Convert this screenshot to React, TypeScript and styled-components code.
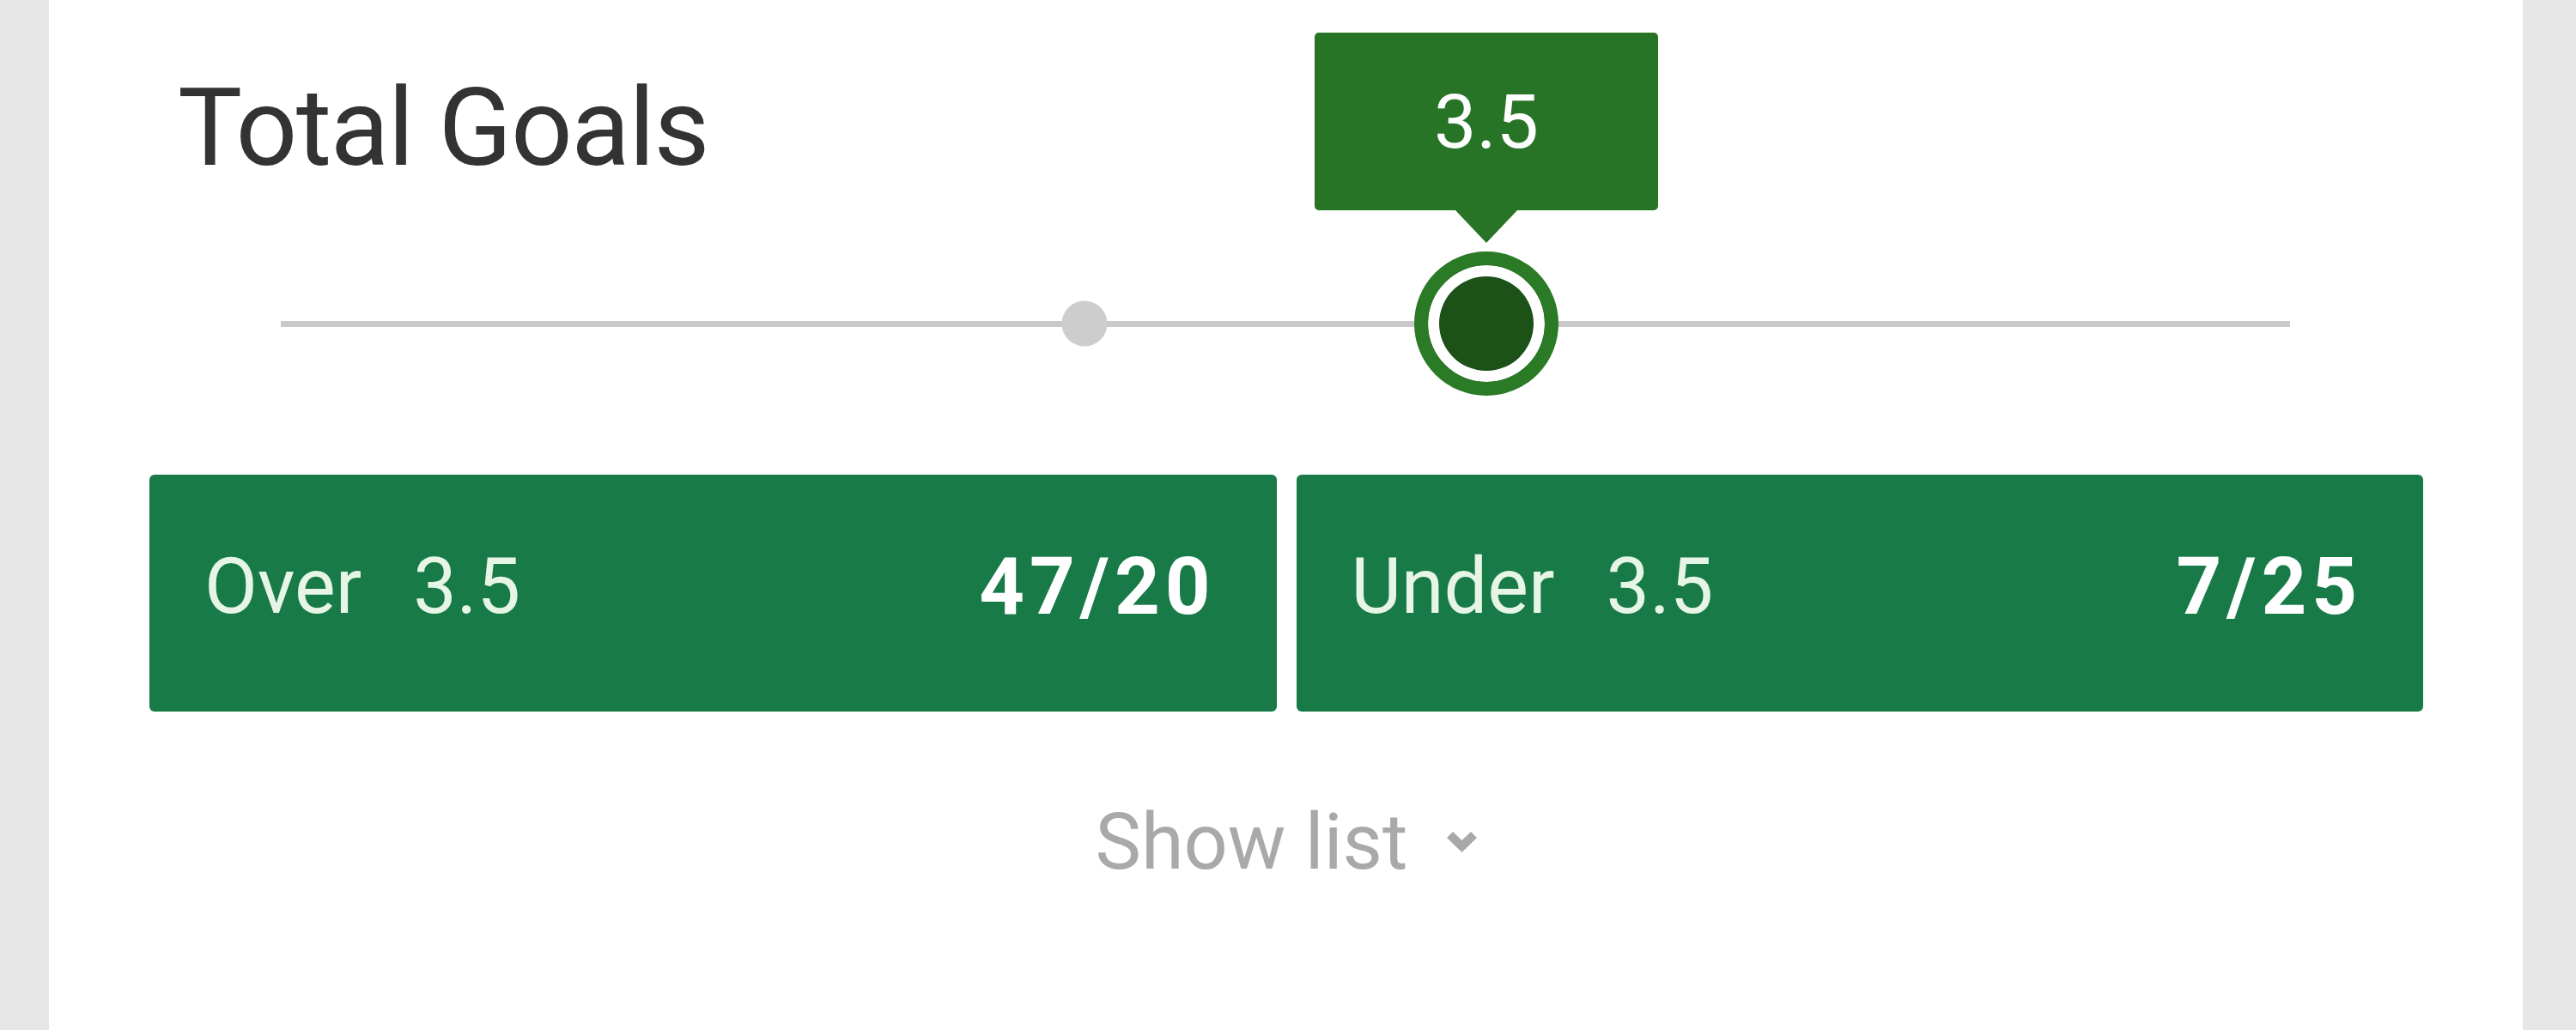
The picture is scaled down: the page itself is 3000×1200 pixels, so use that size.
import styled, { createGlobalStyle } from "styled-components";

const GlobalStyle = createGlobalStyle`
  html, body {
    margin: 0;
    padding: 0;
    background: #e7e7e7;
    font-family: Roboto, "Noto Sans", "Liberation Sans", sans-serif;
  }
`;

const marks = [40];
const value = { label: "3.5", pct: 60 };

const bets = [
  { side: "Over", line: "3.5", odds: "47/20" },
  { side: "Under", line: "3.5", odds: "7/25" },
];

const App: React.FC = () => {
  return (
    <>
      <GlobalStyle />
      <Page>
        <Card>
          <Title>Total Goals</Title>
          <Slider>
            <Track />
            {marks.map((m) => (
              <Mark key={m} style={{ left: `${m}%` }} />
            ))}
            <Handle style={{ left: `${value.pct}%` }}>
              <Tip>{value.label}</Tip>
              <Knob />
            </Handle>
          </Slider>
          <Buttons>
            {bets.map((b) => (
              <Bet key={b.side}>
                <Side>{b.side}</Side>
                <Line>{b.line}</Line>
                <Odds>{b.odds}</Odds>
              </Bet>
            ))}
          </Buttons>
          <ShowList>
            Show list
            <svg width="35" height="24" viewBox="0 0 35 24">
              <path d="M0 7 L7 0 L17.5 10 L28 0 L35 7 L17.5 24 Z" fill="#a9a9a9" />
            </svg>
          </ShowList>
        </Card>
      </Page>
    </>
  );
};

export default App;

const Page = styled.div`
  display: flex;
  height: 1200px;
  padding-left: 57px;
  overflow: hidden;
`;

const Card = styled.div`
  width: 2881px;
  height: 1200px;
  background: #ffffff;
  box-sizing: border-box;
  padding: 86px 116px 0 117px;
  display: flex;
  flex-direction: column;
`;

const Title = styled.h1`
  margin: 0 0 0 33px;
  font-size: 126px;
  line-height: 126px;
  font-weight: 400;
  letter-spacing: -1.5px;
  color: #333333;
`;

const Slider = styled.div`
  position: relative;
  margin: 81px 0 0 153px;
  width: 2340px;
  height: 168px;
  display: flex;
  align-items: center;
`;

const Track = styled.div`
  width: 100%;
  height: 7px;
  background: #c9c9c9;
`;

const Mark = styled.span`
  position: absolute;
  top: 50%;
  width: 53px;
  height: 53px;
  border-radius: 50%;
  background: #cdcdcd;
  transform: translate(-50%, -50%);
`;

const Handle = styled.div`
  position: absolute;
  top: 0;
  width: 168px;
  height: 168px;
  transform: translateX(-50%);
`;

const Knob = styled.div`
  width: 168px;
  height: 168px;
  box-sizing: border-box;
  border-radius: 50%;
  border: 16px solid #2a7a26;
  background: #1c5117;
  box-shadow: inset 0 0 0 13px #ffffff;
`;

const Tip = styled.div`
  position: absolute;
  left: 50%;
  bottom: 216px;
  transform: translateX(-50%);
  width: 400px;
  height: 207px;
  border-radius: 5px;
  background: #287426;
  color: #ffffff;
  font-size: 88px;
  line-height: 207px;
  text-align: center;

  &::after {
    content: "";
    position: absolute;
    left: 50%;
    top: 100%;
    margin-left: -36px;
    border-left: 36px solid transparent;
    border-right: 36px solid transparent;
    border-top: 38px solid #287426;
  }
`;

const Buttons = styled.div`
  display: grid;
  grid-template-columns: 1fr 1fr;
  gap: 23px;
  margin-top: 92px;
`;

const Bet = styled.button`
  display: flex;
  align-items: center;
  height: 276px;
  border: none;
  border-radius: 6px;
  background: #177a47;
  padding: 0 71px 14px 64px;
  font-family: inherit;
  color: #e6f5e6;
  cursor: pointer;
`;

const Side = styled.span`
  font-size: 90px;
  line-height: 90px;
  font-weight: 400;
  margin-right: 60px;
`;

const Line = styled.span`
  font-size: 90px;
  line-height: 90px;
  font-weight: 400;
`;

const Odds = styled.span`
  margin-left: auto;
  font-size: 92px;
  line-height: 90px;
  font-weight: 700;
  letter-spacing: 6px;
  color: #ffffff;
`;

const ShowList = styled.div`
  margin-top: 108px;
  display: flex;
  align-items: center;
  justify-content: center;
  gap: 46px;
  font-size: 90px;
  line-height: 90px;
  color: #a9a9a9;

  svg {
    margin-bottom: 2px;
  }
`;
